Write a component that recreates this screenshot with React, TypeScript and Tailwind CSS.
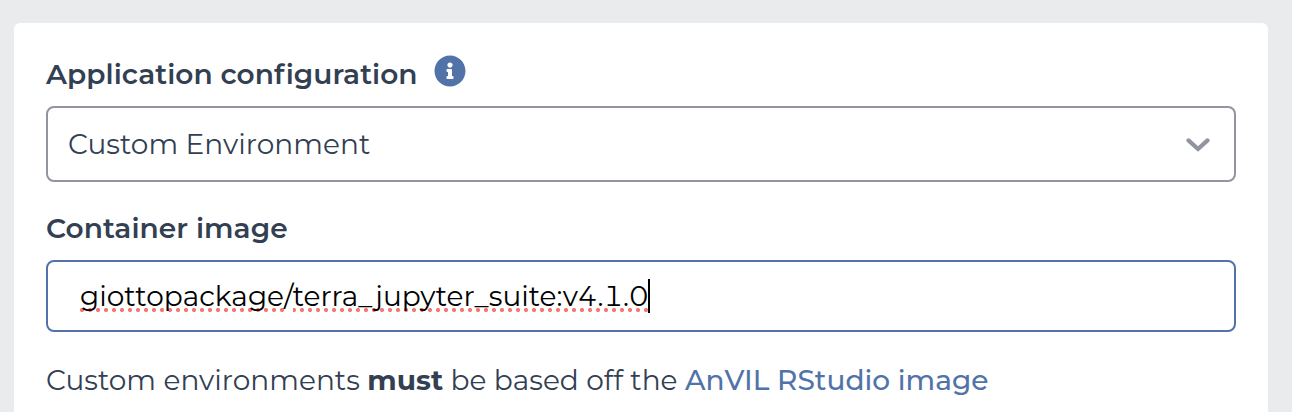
const dots =
  'bg-[radial-gradient(circle_at_center,#f27a72_0,#f27a72_1.7px,transparent_2.4px)] bg-[length:8px_4px] bg-repeat-x';

function InfoIcon() {
  return (
    <svg viewBox="0 0 512 512" className="size-8 shrink-0 fill-[#5173a8]" aria-hidden="true">
      <path d="M256 8C119.043 8 8 119.083 8 256c0 136.997 111.043 248 248 248s248-111.003 248-248C504 119.083 392.957 8 256 8zm0 110c23.196 0 42 18.804 42 42s-18.804 42-42 42-42-18.804-42-42 18.804-42 42-42zm56 254c0 6.627-5.373 12-12 12h-88c-6.627 0-12-5.373-12-12v-24c0-6.627 5.373-12 12-12h12v-64h-12c-6.627 0-12-5.373-12-12v-24c0-6.627 5.373-12 12-12h64c6.627 0 12 5.373 12 12v100h12c6.627 0 12 5.373 12 12v24z" />
    </svg>
  );
}

function Chevron() {
  return (
    <svg viewBox="0 0 24 14" className="mt-0.5 h-3.5 w-6" fill="none" stroke="#9194a1" strokeWidth="4.2" strokeLinecap="round" strokeLinejoin="miter" aria-hidden="true">
      <path d="M2.5 2.4 12 11 21.5 2.4" />
    </svg>
  );
}

export default function App() {
  return (
    <div className="h-[412px] overflow-hidden bg-[#e9ebed] pt-[23px] pr-6 pl-3.5 font-['Montserrat','Inter',sans-serif] text-[28px] leading-[34px] text-[#333f52]">
      <main className="flex h-[420px] flex-col rounded-md bg-white px-8 pt-8 whitespace-nowrap">
        <div className="flex h-[34px] items-start">
          <h2 className="mt-0.5 w-[388px] font-semibold tracking-[0.06px]">
            Application con<span className="tracking-[1.4px]">f</span>iguration
          </h2>
          <InfoIcon />
        </div>
        <div className="mt-[17px] flex h-[76px] shrink-0 items-center justify-between rounded-lg border-2 border-[#9194a1] pr-6 pl-5">
          <span className="tracking-[0.04px]">Custom Environment</span>
          <Chevron />
        </div>
        <h2 className="mt-[29px] font-semibold tracking-[0.06px]">Container image</h2>
        <div className="mt-[15px] flex h-[72px] shrink-0 items-center rounded-lg border-2 border-[#5173a8] pl-8 text-black">
          <div className="relative isolate flex h-[34px] w-[570px]">
            <span className="tracking-[0.03px] tabular-nums">giottopackage/terra_jupyter_suite:v4.1.0</span>
            <div className={`absolute top-[29px] left-0 -z-10 h-1 w-[204px] bg-[position:-2px_0] ${dots}`} />
            <div className={`absolute top-[29px] left-[213px] -z-10 h-1 w-[355px] bg-[position:-3px_0] ${dots}`} />
            <div className="absolute top-0 left-[568px] h-[34px] w-0.5 bg-black" />
          </div>
        </div>
        <p className="mt-[31px] tracking-[0.025px]">
          Custom environments <strong className="font-bold">must</strong> be based off the{' '}
          <a className="font-medium text-[#5173a8]">AnVIL RStudio image</a>
        </p>
      </main>
    </div>
  );
}
